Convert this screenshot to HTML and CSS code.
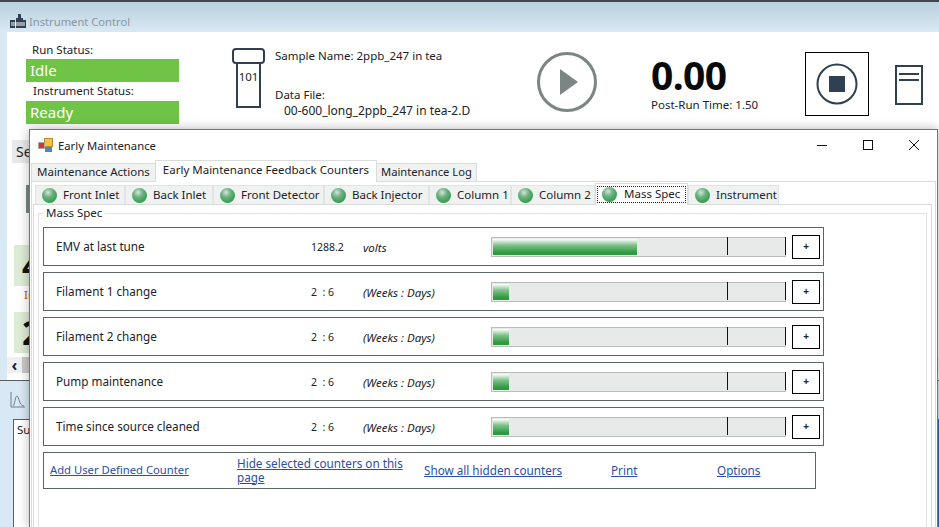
FILE: index.html
```html
<!DOCTYPE html>
<html lang="en">
<head>
    <meta charset="UTF-8">
    <meta name="viewport" content="width=device-width, initial-scale=1.0">
    <title>Early Maintenance</title>
    <link rel="stylesheet" href="styles.css">
</head>
<body>
    <div class="app">
        <div class="app-title">
            <svg class="app-icon" width="16" height="14" viewBox="0 0 16 14">
                <path d="M0 6h5v8H0zM6 4h2V0h3v4h2v10H6zM13 6h3v8h-3z" fill="#2f4050"/>
                <path d="M1 9h14M1 11h14" stroke="#fff" stroke-width="1"/>
            </svg>
            <span>Instrument Control</span>
        </div>

        <div class="app-panel">
            <div class="status-col">
                <div class="status-label">Run Status:</div>
                <div class="status-box">Idle</div>
                <div class="status-label status-label-2">Instrument Status:</div>
                <div class="status-box">Ready</div>
            </div>

            <div class="vial">
                <div class="vial-cap"></div>
                <div class="vial-body">101</div>
            </div>

            <div class="sample-col">
                <div>Sample Name: 2ppb_247 in tea</div>
                <div class="data-file">Data File:</div>
                <div class="data-name">00-600_long_2ppb_247 in tea-2.D</div>
            </div>

            <svg class="play" width="62" height="62" viewBox="0 0 62 62">
                <circle cx="31" cy="31" r="28.5" fill="none" stroke="#7b8684" stroke-width="3"/>
                <path d="M24 18l18 13-18 13z" fill="#7b8684"/>
            </svg>

            <div class="time-col">
                <div class="time">0.00</div>
                <div class="post-run">Post-Run Time: 1.50</div>
            </div>

            <div class="stop-btn">
                <svg width="42" height="42" viewBox="0 0 42 42">
                    <circle cx="21" cy="21" r="19.5" fill="none" stroke="#2f4050" stroke-width="2"/>
                    <rect x="13" y="13" width="16" height="16" fill="#2f4050"/>
                </svg>
            </div>

            <svg class="doc" width="28" height="40" viewBox="0 0 28 40">
                <rect x="1" y="1" width="26" height="38" fill="none" stroke="#2f4050" stroke-width="2"/>
                <path d="M4 9h20M4 15h20" stroke="#2f4050" stroke-width="2"/>
            </svg>
        </div>

        <div class="app-lower">
            <div class="se-box">Se</div>
            <div class="se-icon"></div>
            <div class="green-box">4</div>
            <div class="in-label">In</div>
            <div class="green-box">2</div>
            <div class="scroll-row"><span class="scroll-arrow">&#8249;</span><span class="scroll-thumb"></span></div>
        </div>

        <div class="app-bottom">
            <svg class="chart-icon" width="16" height="16" viewBox="0 0 16 16">
                <path d="M1 0v15h14M3 14c2-1 2-10 4-10s2 10 7 10" fill="none" stroke="#6f7f8c" stroke-width="1"/>
            </svg>
            <div class="summary">Su</div>
        </div>
    </div>

    <div class="dialog">
        <div class="dialog-title">
            <svg width="15" height="15" viewBox="0 0 15 15">
                <rect x="6.5" y="0.5" width="8" height="8" fill="#f5c04a" stroke="#b98a2a"/>
                <rect x="0.5" y="4.5" width="6" height="6" fill="#d8352a" stroke="#a8a8a8"/>
                <rect x="7" y="9" width="7" height="5" fill="#4a86c8"/>
            </svg>
            <span class="dialog-name">Early Maintenance</span>
            <div class="win-controls">
                <svg width="12" height="12" viewBox="0 0 12 12"><path d="M1 6.5h10" stroke="#111"/></svg>
                <svg width="12" height="12" viewBox="0 0 12 12"><rect x="1.5" y="1.5" width="9" height="9" fill="none" stroke="#111"/></svg>
                <svg width="12" height="12" viewBox="0 0 12 12"><path d="M1 1l10 10M11 1L1 11" stroke="#111"/></svg>
            </div>
        </div>

        <div class="tabs">
            <div class="tab">Maintenance Actions</div>
            <div class="tab active">Early Maintenance Feedback Counters</div>
            <div class="tab tab-log">Maintenance Log</div>
        </div>

        <div class="tab-panel">
            <div class="subtabs">
                <div class="subtab w-90"><i class="ball"></i>Front Inlet</div>
                <div class="subtab w-88"><i class="ball"></i>Back Inlet</div>
                <div class="subtab w-111"><i class="ball"></i>Front Detector</div>
                <div class="subtab w-105"><i class="ball"></i>Back Injector</div>
                <div class="subtab w-82"><i class="ball"></i>Column 1</div>
                <div class="subtab w-84"><i class="ball"></i>Column 2</div>
                <div class="subtab active w-93"><span class="focus"><i class="ball"></i>Mass Spec</span></div>
                <div class="subtab w-91"><i class="ball"></i>Instrument</div>
            </div>

            <div class="subpanel">
                <div class="group">
                    <span class="legend">Mass Spec</span>

                    <div class="counter">
                        <div class="c-name">EMV at last tune</div>
                        <div class="c-value">1288.2</div>
                        <div class="c-unit">volts</div>
                        <div class="bar"><div class="fill" style="width: 144px"></div><i class="tick"></i><i class="tick-end"></i></div>
                        <div class="plus">+</div>
                    </div>
                    <div class="counter">
                        <div class="c-name">Filament 1 change</div>
                        <div class="c-value">2 &nbsp;: 6</div>
                        <div class="c-unit">(Weeks : Days)</div>
                        <div class="bar"><div class="fill" style="width: 16px"></div><i class="tick"></i><i class="tick-end"></i></div>
                        <div class="plus">+</div>
                    </div>
                    <div class="counter">
                        <div class="c-name">Filament 2 change</div>
                        <div class="c-value">2 &nbsp;: 6</div>
                        <div class="c-unit">(Weeks : Days)</div>
                        <div class="bar"><div class="fill" style="width: 16px"></div><i class="tick"></i><i class="tick-end"></i></div>
                        <div class="plus">+</div>
                    </div>
                    <div class="counter">
                        <div class="c-name">Pump maintenance</div>
                        <div class="c-value">2 &nbsp;: 6</div>
                        <div class="c-unit">(Weeks : Days)</div>
                        <div class="bar"><div class="fill" style="width: 16px"></div><i class="tick"></i><i class="tick-end"></i></div>
                        <div class="plus">+</div>
                    </div>
                    <div class="counter">
                        <div class="c-name">Time since source cleaned</div>
                        <div class="c-value">2 &nbsp;: 6</div>
                        <div class="c-unit">(Weeks : Days)</div>
                        <div class="bar"><div class="fill" style="width: 16px"></div><i class="tick"></i><i class="tick-end"></i></div>
                        <div class="plus">+</div>
                    </div>

                    <div class="links">
                        <a href="#" class="link-add">Add User Defined Counter</a>
                        <a href="#" class="link-hide">Hide selected counters on this page</a>
                        <a href="#" class="link-show">Show all hidden counters</a>
                        <a href="#" class="link-print">Print</a>
                        <a href="#">Options</a>
                    </div>
                </div>
            </div>
        </div>
    </div>
</body>
</html>
```

FILE: styles.css
```css
html, body {
    margin: 0;
    height: 100%;
    overflow: hidden;
}
body {
    position: relative;
    width: 939px;
    height: 527px;
    font-family: "Noto Sans", "Open Sans", sans-serif;
    font-size: 11.5px;
    color: #1c2228;
    background-color: #d8e8f4;
}

/* instrument control window, behind the dialog */
.app {
    height: 527px;
    display: flex;
    flex-direction: column;
}
.app-title {
    flex-shrink: 0;
    height: 22px;
    border-top: 2px solid #41474d;
    background: linear-gradient(#b9d0de, #d9e9f4);
    display: flex;
    align-items: center;
    gap: 3px;
    padding-left: 10px;
    padding-top: 8px;
    color: #8a979f;
    font-size: 11.2px;
}
.app-panel {
    flex-shrink: 0;
    height: 100px;
    margin-left: 7px;
    background-color: white;
    display: flex;
    align-items: flex-start;
}
.status-col {
    width: 153px;
    margin-left: 19px;
    padding-top: 11px;
}
.status-label {
    padding-left: 6px;
    height: 16px;
    line-height: 14px;
}
.status-label-2 {
    padding-top: 2px;
    height: 17px;
    padding-left: 7px;
}
.status-box {
    height: 23px;
    line-height: 23px;
    background-color: #70c445;
    color: white;
    font-size: 15px;
    padding-left: 4px;
}
.vial {
    width: 33px;
    margin-left: 53px;
    margin-top: 16px;
}
.vial-cap {
    height: 12px;
    border: 2px solid #2f4050;
    border-radius: 4px;
}
.vial-body {
    width: 21px;
    height: 37px;
    margin-left: 4px;
    border: 2px solid #2f4050;
    border-top: 0;
    line-height: 16px;
    padding-top: 5px;
    text-align: center;
}
.sample-col {
    width: 261px;
    margin-left: 10px;
    padding-top: 16px;
    line-height: 16px;
}
.data-file {
    margin-top: 23px;
}
.data-name {
    padding-left: 9px;
    font-size: 12px;
}
.play {
    margin-top: 19px;
}
.time-col {
    margin-left: 53px;
    width: 154px;
    padding-top: 23px;
}
.time {
    font-size: 39px;
    font-weight: bold;
    line-height: 40px;
    letter-spacing: -0.6px;
    color: #0a0a0a;
}
.post-run {
    margin-top: 2px;
}
.stop-btn {
    width: 62px;
    height: 62px;
    margin-top: 20px;
    border: 1px solid black;
    display: flex;
    align-items: center;
    justify-content: center;
}
.doc {
    margin-left: 26px;
    margin-top: 33px;
}
.app-lower {
    flex-shrink: 0;
    height: 248px;
    box-sizing: border-box;
    margin-left: 7px;
    background-color: white;
    padding-top: 8px;
}
.se-box {
    width: 14px;
    height: 23px;
    margin-left: 5px;
    background-color: #e8e8e8;
    font-size: 14px;
    line-height: 23px;
    padding-left: 4px;
}
.se-icon {
    width: 3px;
    height: 28px;
    margin: 22px 0 0 19px;
    background-color: #7b8684;
}
.green-box {
    width: 7px;
    height: 41px;
    margin: 32px 0 0 7px;
    padding-left: 8px;
    background-color: #dcebd5;
    font-size: 34px;
    font-weight: bold;
    line-height: 41px;
    color: #111;
}
.in-label {
    height: 26px;
    line-height: 18px;
    padding-left: 17px;
    color: #c8500a;
}
.in-label + .green-box {
    margin-top: 0;
}
.scroll-row {
    height: 16px;
    margin-top: 4px;
    background-color: #f0f0f0;
    display: flex;
    align-items: center;
}
.scroll-arrow {
    width: 15px;
    text-align: center;
    font-size: 16px;
    line-height: 16px;
    font-weight: bold;
}
.scroll-thumb {
    width: 14px;
    height: 16px;
    background-color: #c8c8c8;
}
.app-bottom {
    flex: 1;
    min-height: 0;
    display: flex;
    flex-direction: column;
    border-top: 1px solid #5a5f63;
    padding: 11px 0 0 10px;
}
.chart-icon {
    flex-shrink: 0;
}
.summary {
    flex: 1;
    margin: 11px 0 0 3px;
    padding: 2px 3px;
    border: 1px solid #2e6aa8;
    border-bottom: 0;
    background-color: white;
}

/* early maintenance dialog, floats over the app */
.dialog {
    position: absolute;
    left: 29px;
    top: 129px;
    width: 907px;
    height: 398px;
    background-color: white;
    border: 1px solid #6f7679;
    border-bottom: 0;
    box-shadow: 0 0 10px rgba(0, 0, 0, 0.3);
}
.dialog-title {
    height: 30px;
    display: flex;
    align-items: center;
    padding-left: 8px;
}
.dialog-name {
    margin-left: 5px;
    font-size: 11.3px;
}
.win-controls {
    margin-left: auto;
    display: flex;
    gap: 34px;
    padding-right: 17px;
}
.tabs {
    display: flex;
    align-items: flex-end;
    height: 21px;
    padding-left: 1px;
}
.tab {
    height: 18px;
    line-height: 16px;
    box-sizing: border-box;
    padding: 0 5px;
    background-color: #f0f2f1;
    border: 1px solid #d9dcdb;
    border-bottom: 0;
    margin-right: -1px;
}
.tab.active {
    height: 22px;
    line-height: 18px;
    padding: 0 7px;
    background-color: white;
    position: relative;
    z-index: 1;
    margin-bottom: -1px;
}
.tab-log {
    padding: 0 4px;
    font-size: 11.2px;
}
.tab-panel {
    margin: 0 1px;
    height: 347px;
    border: 1px solid #d9dcdb;
    padding: 3px 0 0 1px;
}
.subtabs {
    display: flex;
    align-items: flex-end;
    height: 19px;
    padding-left: 2px;
}
.subtab {
    height: 19px;
    box-sizing: border-box;
    display: flex;
    align-items: center;
    background-color: #f0f2f1;
    border: 1px solid #e2e4e3;
    border-bottom: 0;
    padding-left: 6px;
    line-height: 16px;
}
.subtab.active {
    height: 22px;
    background-color: white;
    border-color: #d9dcdb;
    position: relative;
    margin-bottom: -1px;
    padding: 0 1px 1px 1px;
    z-index: 1;
}
.focus {
    flex: 1;
    height: 17px;
    display: flex;
    align-items: center;
    padding-left: 5px;
    outline: 1px dotted #222;
    outline-offset: -1px;
}
.focus .ball {
    margin-right: 7px;
}
.w-90 { width: 90px; }
.w-88 { width: 88px; }
.w-111 { width: 111px; }
.w-105 { width: 105px; }
.w-82 { width: 82px; }
.w-84 { width: 84px; }
.w-93 { width: 93px; }
.w-91 { width: 91px; }
.ball {
    width: 15px;
    height: 15px;
    margin-right: 6px;
    border-radius: 50%;
    flex-shrink: 0;
    background: radial-gradient(circle at 40% 30%, #cfe8d6 0, #6db082 35%, #37a151 70%, #2c8c45 100%);
}
.subpanel {
    border: 1px solid #d9dcdb;
    height: 322px;
    margin-right: 3px;
    padding: 8px 4px 0 4px;
}
.group {
    border: 1px solid #e0e2e1;
    height: 320px;
    padding: 13px 0 0 4px;
    position: relative;
}
.legend {
    position: absolute;
    left: 4px;
    top: -8px;
    padding: 0 3px;
    line-height: 14px;
    background-color: white;
}
.counter {
    width: 781px;
    height: 39px;
    box-sizing: border-box;
    margin-bottom: 6px;
    border: 1px solid #5c6566;
    display: flex;
    align-items: center;
    padding-left: 12px;
}
.c-name {
    width: 255px;
    padding-bottom: 1px;
    font-size: 11.7px;
}
.c-value {
    width: 52px;
    padding-top: 1px;
    font-size: 10.5px;
}
.c-unit {
    width: 128px;
    padding-top: 1px;
    font-style: italic;
}
.bar {
    width: 295px;
    height: 20px;
    box-sizing: border-box;
    background-color: #e8eae9;
    border: 1px solid #b9bdbc;
    padding: 1px;
    position: relative;
}
.fill {
    height: 16px;
    background: linear-gradient(white, #7cc08a 40%, #2e9a3e 85%);
}
.tick, .tick-end {
    position: absolute;
    top: -1px;
    width: 1px;
    height: 18px;
    background-color: #111;
}
.tick { left: 235px; }
.tick-end { right: -1px; }
.plus {
    width: 28px;
    height: 24px;
    box-sizing: border-box;
    margin-left: 6px;
    border: 1px solid black;
    text-align: center;
    font-size: 10px;
    line-height: 21px;
    font-weight: bold;
}
.links {
    width: 773px;
    height: 37px;
    box-sizing: border-box;
    border: 1px solid #5c6566;
    display: flex;
    align-items: center;
    padding: 0 0 2px 6px;
}
.links a {
    color: #2a4fa8;
    font-size: 11.7px;
    line-height: 14px;
}
.links .link-add { width: 187px; font-size: 11.25px; }
.link-hide { width: 172px; margin-right: 15px; }
.link-show { width: 187px; }
.link-print { width: 106px; }
```
